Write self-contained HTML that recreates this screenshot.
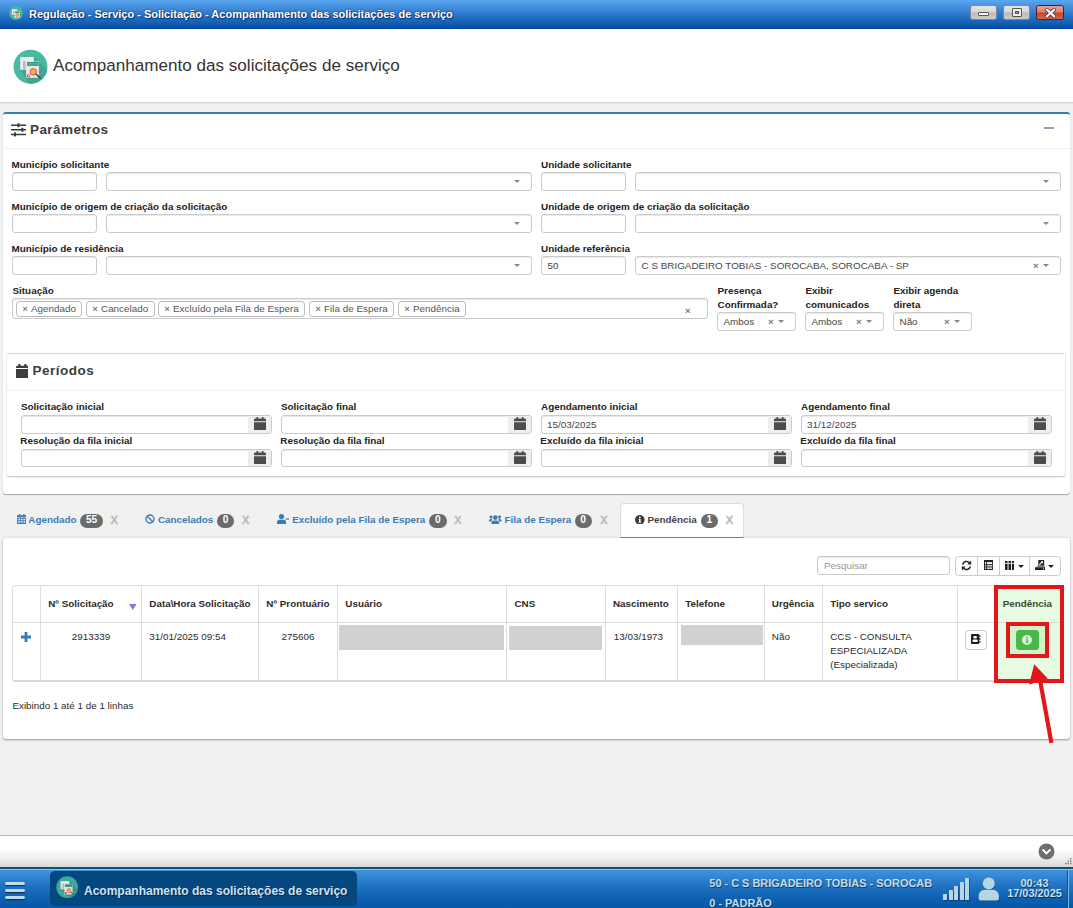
<!DOCTYPE html>
<html><head><meta charset="utf-8"><title>Acompanhamento</title>
<style>
*{box-sizing:border-box;margin:0;padding:0}
html,body{width:1073px;height:908px;overflow:hidden}
body{position:relative;background:#f1f1f1;font-family:"Liberation Sans",sans-serif;font-size:10px;color:#333}
.a{position:absolute}
.t{position:absolute;white-space:nowrap;line-height:1}
.b{font-weight:bold}
#titlebar{left:0;top:0;width:1073px;height:29px;background:linear-gradient(#5aa7f0 0%,#3a84d5 36%,#1c69bb 68%,#0a54aa 92%,#00429c 100%)}
#hdr{left:0;top:29px;width:1073px;height:74px;background:#fff;border-bottom:1px solid #d6d6d6;box-shadow:0 1px 0 #e6e6e6}
.wb{position:absolute;top:5px;height:15px;width:27px;border:1px solid #7d8894;border-radius:2.5px;background:linear-gradient(#e4e4e4 0%,#d6d6d6 46%,#bcbcbc 52%,#cbcbcb 100%)}
.panel{position:absolute;background:#fff;border-radius:3px;box-shadow:0 1px 1px rgba(0,0,0,.18)}
.inp{position:absolute;height:18px;background:#fff;border:1px solid #cbcbcb;border-radius:3px;box-shadow:inset 0 1px 1px rgba(0,0,0,.09)}
.lbl{position:absolute;white-space:nowrap;font-weight:bold;font-size:9.9px;line-height:1;color:#222}
.arr{position:absolute;width:0;height:0;border-left:3px solid transparent;border-right:3px solid transparent;border-top:3px solid #888}
</style></head><body>
<div id="titlebar" class="a">
<svg class="a" style="left:8.8px;top:6px" width="14.2" height="14.2" viewBox="0 0 34 34"><circle cx="17" cy="17" r="16.5" fill="#4ab8a1"/><path d="M20 8L32 20Q30 29 22 33L7 21Z" fill="#40a892"/><rect x="7" y="8" width="13" height="13" fill="#ececee"/><rect x="10" y="12" width="3" height="9" fill="#b5b5ba"/><rect x="13" y="12" width="13" height="16" fill="#eaeaec"/><rect x="14" y="13" width="11" height="4" fill="#2f8f78"/><circle cx="20" cy="22" r="3.5" fill="#e6b94a" stroke="#e8564a" stroke-width="1.5"/></svg>
<div class="t b" style="left:29px;top:9px;font-size:11px;color:#fff;text-shadow:0 0 2px rgba(0,30,80,.9),1px 1px 1px rgba(0,30,80,.6)">Regulação - Serviço - Solicitação - Acompanhamento das solicitações de serviço</div>
<div class="wb" style="left:970px"><div class="a" style="left:7px;top:6px;width:11px;height:4px;background:#fff;border:1px solid #555;border-radius:1px"></div></div>
<div class="wb" style="left:1003px"><div class="a" style="left:8px;top:2px;width:10px;height:9px;background:#eee;border:1px solid #555;border-radius:1px"><div class="a" style="left:2px;top:2px;width:4px;height:3px;border:1px solid #555;background:#999"></div></div></div>
<div class="wb" style="left:1036px;width:28px;border-color:#5a1a1a;background:linear-gradient(#e8a090 0%,#dc8070 48%,#c4442a 52%,#d2664e 100%)"><svg class="a" style="left:7.5px;top:1.8px" width="11" height="10" viewBox="0 0 11 10"><path d="M2 1.8L9 8.2M9 1.8L2 8.2" stroke="#4a3030" stroke-width="3.8" stroke-linecap="square"/><path d="M2 1.8L9 8.2M9 1.8L2 8.2" stroke="#fff" stroke-width="2.3" stroke-linecap="square"/></svg></div>
</div>
<div id="hdr" class="a">
<svg class="a" style="left:13px;top:20px" width="35" height="35" viewBox="0 0 35 35">
<defs><clipPath id="cc"><circle cx="17.5" cy="17.8" r="17"/></clipPath></defs>
<circle cx="17.5" cy="17.8" r="17" fill="#4bb9a2"/>
<g clip-path="url(#cc)"><path d="M20.9 8 L40 27 L40 45 L23 45 L7.2 20.8 Z" fill="#3fa690"/></g>
<rect x="7.2" y="8" width="13.7" height="12.8" fill="#ececee"/>
<rect x="10.1" y="12" width="2.4" height="8.8" fill="#b6b6bb"/>
<rect x="13.1" y="12.5" width="12.8" height="16.3" fill="#e9e9ec"/>
<rect x="14" y="13" width="11.6" height="3.9" fill="#2f8f78"/>
<rect x="14.6" y="14.4" width="10.4" height="1.1" fill="#7fc0ae"/>
<path d="M23 25 L27.3 29.3" stroke="#34465a" stroke-width="1.6" stroke-linecap="round"/>
<circle cx="20.3" cy="22.8" r="3.1" fill="#e4b94c" stroke="#e8574b" stroke-width="1.1"/>
<circle cx="15.3" cy="26.9" r="1.7" fill="#e8453c"/><rect x="15" y="26" width=".7" height="1.8" fill="#fff"/>
</svg>
<div class="t" style="left:53px;top:28px;font-size:17.1px;color:#333">Acompanhamento das solicitações de serviço</div>
</div>

<div class="panel" style="left:3px;top:112px;width:1067px;height:382px;border-top:2px solid #3580b5;box-shadow:0 1px 1px rgba(0,0,0,.32)"></div>
<svg class="a" style="left:11px;top:123px" width="15" height="14" viewBox="0 0 15 14"><g stroke="#3a3a3a" stroke-width="1.5" fill="none"><path d="M0 2.2H15M0 6.8H15M0 11.4H15"/></g><g fill="#3a3a3a"><rect x="6.5" y="0.2" width="2" height="4"/><rect x="10.4" y="4.8" width="2" height="4"/><rect x="3" y="9.4" width="2" height="4"/></g></svg>
<div class="t b" style="left:30px;top:122.5px;font-size:13.5px;letter-spacing:.42px;color:#3c3c3c">Parâmetros</div>
<div class="a" style="left:1044px;top:127px;width:10px;height:2px;background:#97a0b3"></div>
<div class="a" style="left:3px;top:148px;width:1067px;height:1px;background:#f0f0f0"></div>
<div class="lbl" style="left:11.5px;top:159.5px">Município solicitante</div>
<div class="lbl" style="left:541px;top:159.5px">Unidade solicitante</div>
<div class="inp" style="left:12px;top:172px;width:85px;height:19px;"></div>
<div class="inp" style="left:106px;top:172px;width:425.5px;height:19px;"><div class="arr" style="right:11px;top:7px"></div></div>
<div class="inp" style="left:541px;top:172px;width:85px;height:19px;"></div>
<div class="inp" style="left:635px;top:172px;width:425.5px;height:19px;"><div class="arr" style="right:11px;top:7px"></div></div>
<div class="lbl" style="left:11.5px;top:201.5px">Município de origem de criação da solicitação</div>
<div class="lbl" style="left:541px;top:201.5px">Unidade de origem de criação da solicitação</div>
<div class="inp" style="left:12px;top:214px;width:85px;height:19px;"></div>
<div class="inp" style="left:106px;top:214px;width:425.5px;height:19px;"><div class="arr" style="right:11px;top:7px"></div></div>
<div class="inp" style="left:541px;top:214px;width:85px;height:19px;"></div>
<div class="inp" style="left:635px;top:214px;width:425.5px;height:19px;"><div class="arr" style="right:11px;top:7px"></div></div>
<div class="lbl" style="left:11.5px;top:243.5px">Município de residência</div>
<div class="lbl" style="left:541px;top:243.5px">Unidade referência</div>
<div class="inp" style="left:12px;top:256px;width:85px;height:19px;"></div>
<div class="inp" style="left:106px;top:256px;width:425.5px;height:19px;"><div class="arr" style="right:11px;top:7px"></div></div>
<div class="inp" style="left:541px;top:256px;width:85px;height:19px;"><div class="t" style="left:5.5px;top:4px;font-size:9.9px;color:#464646">50</div></div>
<div class="inp" style="left:635px;top:256px;width:425.5px;height:19px;"><div class="t" style="left:5.5px;top:4px;font-size:9.9px;color:#464646">C S BRIGADEIRO TOBIAS - SOROCABA, SOROCABA - SP</div><div class="t b" style="right:21px;top:3.5px;font-size:9.5px;color:#7a7a7a">×</div><div class="arr" style="right:11px;top:7px"></div></div>
<div class="lbl" style="left:12.5px;top:285.5px">Situação</div>
<div class="inp" style="left:12px;top:298px;width:695.5px;height:21px;"><div class="a" style="left:3px;top:2px;width:66px;height:16px;border:1px solid #b9b9b9;border-radius:3.5px;background:#fff"><span class="t b" style="left:5.5px;top:3px;font-size:9px;color:#808080">×</span><span class="t" style="left:14px;top:2px;font-size:9.9px;color:#555">Agendado</span></div><div class="a" style="left:73px;top:2px;width:69px;height:16px;border:1px solid #b9b9b9;border-radius:3.5px;background:#fff"><span class="t b" style="left:5.5px;top:3px;font-size:9px;color:#808080">×</span><span class="t" style="left:14px;top:2px;font-size:9.9px;color:#555">Cancelado</span></div><div class="a" style="left:145px;top:2px;width:147px;height:16px;border:1px solid #b9b9b9;border-radius:3.5px;background:#fff"><span class="t b" style="left:5.5px;top:3px;font-size:9px;color:#808080">×</span><span class="t" style="left:14px;top:2px;font-size:9.9px;color:#555">Excluído pela Fila de Espera</span></div><div class="a" style="left:296px;top:2px;width:85px;height:16px;border:1px solid #b9b9b9;border-radius:3.5px;background:#fff"><span class="t b" style="left:5.5px;top:3px;font-size:9px;color:#808080">×</span><span class="t" style="left:14px;top:2px;font-size:9.9px;color:#555">Fila de Espera</span></div><div class="a" style="left:385px;top:2px;width:68px;height:16px;border:1px solid #b9b9b9;border-radius:3.5px;background:#fff"><span class="t b" style="left:5.5px;top:3px;font-size:9px;color:#808080">×</span><span class="t" style="left:14px;top:2px;font-size:9.9px;color:#555">Pendência</span></div><div class="t b" style="right:16px;top:6.5px;font-size:9.5px;color:#7a7a7a">×</div></div>
<div class="lbl" style="left:717.5px;top:285.5px">Presença</div>
<div class="lbl" style="left:717.5px;top:299.5px">Confirmada?</div>
<div class="inp" style="left:717px;top:312px;width:78.5px;height:19px;"><div class="t" style="left:5.5px;top:4px;font-size:9.9px;color:#464646">Ambos</div><div class="t b" style="right:21px;top:3.5px;font-size:9.5px;color:#7a7a7a">×</div><div class="arr" style="right:11px;top:7px"></div></div>
<div class="lbl" style="left:805.5px;top:285.5px">Exibir</div>
<div class="lbl" style="left:805.5px;top:299.5px">comunicados</div>
<div class="inp" style="left:805px;top:312px;width:78.5px;height:19px;"><div class="t" style="left:5.5px;top:4px;font-size:9.9px;color:#464646">Ambos</div><div class="t b" style="right:21px;top:3.5px;font-size:9.5px;color:#7a7a7a">×</div><div class="arr" style="right:11px;top:7px"></div></div>
<div class="lbl" style="left:893.5px;top:285.5px">Exibir agenda</div>
<div class="lbl" style="left:893.5px;top:299.5px">direta</div>
<div class="inp" style="left:893px;top:312px;width:78.5px;height:19px;"><div class="t" style="left:5.5px;top:4px;font-size:9.9px;color:#464646">Não</div><div class="t b" style="right:21px;top:3.5px;font-size:9.5px;color:#7a7a7a">×</div><div class="arr" style="right:11px;top:7px"></div></div>
<div class="panel" style="left:7px;top:353px;width:1058px;height:123px;border-top:1px solid #d2d6de;box-shadow:0 1px 2px rgba(0,0,0,.28)"></div>
<svg class="a" style="left:15.7px;top:363.8px" width="12.8" height="14.4" viewBox="0 0 12.8 14.4"><g fill="#3d3d3d"><rect x="2.3" y="0" width="2.3" height="3.2" rx=".7"/><rect x="8.2" y="0" width="2.3" height="3.2" rx=".7"/><path d="M1.4 1.7H11.4A1.4 1.4 0 0 1 12.8 3.1V4.1H0V3.1A1.4 1.4 0 0 1 1.4 1.7Z"/><path d="M0 4.9H12.8V13A1.4 1.4 0 0 1 11.4 14.4H1.4A1.4 1.4 0 0 1 0 13Z"/></g></svg>
<div class="t b" style="left:32.5px;top:363.5px;font-size:13.5px;letter-spacing:.5px;color:#3c3c3c">Períodos</div>
<div class="a" style="left:7px;top:390px;width:1058px;height:1px;background:#f0f0f0"></div>
<div class="lbl" style="left:21px;top:401.5px">Solicitação inicial</div>
<div class="inp" style="left:21px;top:415px;width:251px;height:19px;"><div class="a" style="right:0;top:0;width:23px;height:17px;background:#eee;border-radius:0 2px 2px 0"><svg class="a" style="left:5.5px;top:0.8px" width="12" height="13.4" viewBox="0 0 13 14.5"><g fill="#4c4c4c"><rect x="2.6" y="0" width="1.9" height="3" rx=".5"/><rect x="8.5" y="0" width="1.9" height="3" rx=".5"/><path d="M1.2 1.7H11.8A1.2 1.2 0 0 1 13 2.9V4.6H0V2.9A1.2 1.2 0 0 1 1.2 1.7Z"/><path d="M0 5.6H13V13.2A1.3 1.3 0 0 1 11.7 14.5H1.3A1.3 1.3 0 0 1 0 13.2Z"/></g></svg></div></div>
<div class="lbl" style="left:20.3px;top:435.5px">Resolução da fila inicial</div>
<div class="inp" style="left:21px;top:449px;width:251px;height:18px;"><div class="a" style="right:0;top:0;width:23px;height:16px;background:#eee;border-radius:0 2px 2px 0"><svg class="a" style="left:5.5px;top:0.8px" width="12" height="13.4" viewBox="0 0 13 14.5"><g fill="#4c4c4c"><rect x="2.6" y="0" width="1.9" height="3" rx=".5"/><rect x="8.5" y="0" width="1.9" height="3" rx=".5"/><path d="M1.2 1.7H11.8A1.2 1.2 0 0 1 13 2.9V4.6H0V2.9A1.2 1.2 0 0 1 1.2 1.7Z"/><path d="M0 5.6H13V13.2A1.3 1.3 0 0 1 11.7 14.5H1.3A1.3 1.3 0 0 1 0 13.2Z"/></g></svg></div></div>
<div class="lbl" style="left:281px;top:401.5px">Solicitação final</div>
<div class="inp" style="left:281px;top:415px;width:251px;height:19px;"><div class="a" style="right:0;top:0;width:23px;height:17px;background:#eee;border-radius:0 2px 2px 0"><svg class="a" style="left:5.5px;top:0.8px" width="12" height="13.4" viewBox="0 0 13 14.5"><g fill="#4c4c4c"><rect x="2.6" y="0" width="1.9" height="3" rx=".5"/><rect x="8.5" y="0" width="1.9" height="3" rx=".5"/><path d="M1.2 1.7H11.8A1.2 1.2 0 0 1 13 2.9V4.6H0V2.9A1.2 1.2 0 0 1 1.2 1.7Z"/><path d="M0 5.6H13V13.2A1.3 1.3 0 0 1 11.7 14.5H1.3A1.3 1.3 0 0 1 0 13.2Z"/></g></svg></div></div>
<div class="lbl" style="left:280.3px;top:435.5px">Resolução da fila final</div>
<div class="inp" style="left:281px;top:449px;width:251px;height:18px;"><div class="a" style="right:0;top:0;width:23px;height:16px;background:#eee;border-radius:0 2px 2px 0"><svg class="a" style="left:5.5px;top:0.8px" width="12" height="13.4" viewBox="0 0 13 14.5"><g fill="#4c4c4c"><rect x="2.6" y="0" width="1.9" height="3" rx=".5"/><rect x="8.5" y="0" width="1.9" height="3" rx=".5"/><path d="M1.2 1.7H11.8A1.2 1.2 0 0 1 13 2.9V4.6H0V2.9A1.2 1.2 0 0 1 1.2 1.7Z"/><path d="M0 5.6H13V13.2A1.3 1.3 0 0 1 11.7 14.5H1.3A1.3 1.3 0 0 1 0 13.2Z"/></g></svg></div></div>
<div class="lbl" style="left:541px;top:401.5px">Agendamento inicial</div>
<div class="inp" style="left:541px;top:415px;width:251px;height:19px;"><div class="t" style="left:5px;top:4px;font-size:9.9px;color:#444">15/03/2025</div><div class="a" style="right:0;top:0;width:23px;height:17px;background:#eee;border-radius:0 2px 2px 0"><svg class="a" style="left:5.5px;top:0.8px" width="12" height="13.4" viewBox="0 0 13 14.5"><g fill="#4c4c4c"><rect x="2.6" y="0" width="1.9" height="3" rx=".5"/><rect x="8.5" y="0" width="1.9" height="3" rx=".5"/><path d="M1.2 1.7H11.8A1.2 1.2 0 0 1 13 2.9V4.6H0V2.9A1.2 1.2 0 0 1 1.2 1.7Z"/><path d="M0 5.6H13V13.2A1.3 1.3 0 0 1 11.7 14.5H1.3A1.3 1.3 0 0 1 0 13.2Z"/></g></svg></div></div>
<div class="lbl" style="left:540.3px;top:435.5px">Excluído da fila inicial</div>
<div class="inp" style="left:541px;top:449px;width:251px;height:18px;"><div class="a" style="right:0;top:0;width:23px;height:16px;background:#eee;border-radius:0 2px 2px 0"><svg class="a" style="left:5.5px;top:0.8px" width="12" height="13.4" viewBox="0 0 13 14.5"><g fill="#4c4c4c"><rect x="2.6" y="0" width="1.9" height="3" rx=".5"/><rect x="8.5" y="0" width="1.9" height="3" rx=".5"/><path d="M1.2 1.7H11.8A1.2 1.2 0 0 1 13 2.9V4.6H0V2.9A1.2 1.2 0 0 1 1.2 1.7Z"/><path d="M0 5.6H13V13.2A1.3 1.3 0 0 1 11.7 14.5H1.3A1.3 1.3 0 0 1 0 13.2Z"/></g></svg></div></div>
<div class="lbl" style="left:801px;top:401.5px">Agendamento final</div>
<div class="inp" style="left:801px;top:415px;width:251px;height:19px;"><div class="t" style="left:5px;top:4px;font-size:9.9px;color:#444">31/12/2025</div><div class="a" style="right:0;top:0;width:23px;height:17px;background:#eee;border-radius:0 2px 2px 0"><svg class="a" style="left:5.5px;top:0.8px" width="12" height="13.4" viewBox="0 0 13 14.5"><g fill="#4c4c4c"><rect x="2.6" y="0" width="1.9" height="3" rx=".5"/><rect x="8.5" y="0" width="1.9" height="3" rx=".5"/><path d="M1.2 1.7H11.8A1.2 1.2 0 0 1 13 2.9V4.6H0V2.9A1.2 1.2 0 0 1 1.2 1.7Z"/><path d="M0 5.6H13V13.2A1.3 1.3 0 0 1 11.7 14.5H1.3A1.3 1.3 0 0 1 0 13.2Z"/></g></svg></div></div>
<div class="lbl" style="left:800.3px;top:435.5px">Excluído da fila final</div>
<div class="inp" style="left:801px;top:449px;width:251px;height:18px;"><div class="a" style="right:0;top:0;width:23px;height:16px;background:#eee;border-radius:0 2px 2px 0"><svg class="a" style="left:5.5px;top:0.8px" width="12" height="13.4" viewBox="0 0 13 14.5"><g fill="#4c4c4c"><rect x="2.6" y="0" width="1.9" height="3" rx=".5"/><rect x="8.5" y="0" width="1.9" height="3" rx=".5"/><path d="M1.2 1.7H11.8A1.2 1.2 0 0 1 13 2.9V4.6H0V2.9A1.2 1.2 0 0 1 1.2 1.7Z"/><path d="M0 5.6H13V13.2A1.3 1.3 0 0 1 11.7 14.5H1.3A1.3 1.3 0 0 1 0 13.2Z"/></g></svg></div></div>
<svg class="a" style="left:16.8px;top:514.2px" width="9.4" height="10" viewBox="0 0 14 15"><g fill="#3a7ab5"><rect x="2.8" y="0" width="2" height="3"/><rect x="9.2" y="0" width="2" height="3"/><path d="M0 1.8H14V5H0Z"/><path d="M0 5.8H14V15H0Z"/></g><g fill="#f1f1f1"><rect x="1.8" y="7.2" width="2.6" height="2.2"/><rect x="5.7" y="7.2" width="2.6" height="2.2"/><rect x="9.6" y="7.2" width="2.6" height="2.2"/><rect x="1.8" y="10.8" width="2.6" height="2.2"/><rect x="5.7" y="10.8" width="2.6" height="2.2"/><rect x="9.6" y="10.8" width="2.6" height="2.2"/></g></svg>
<div class="t b" style="left:28.3px;top:513.7px;font-size:9.85px;color:#3a7ab5;transform:translateY(.7px)">Agendado</div>
<div class="a" style="left:80px;top:513.5px;width:23px;height:14px;border-radius:7px;background:#6b6b6b"><div class="t b" style="left:0;width:100%;text-align:center;top:1.6px;font-size:10.2px;letter-spacing:-.2px;color:#fff">55</div></div>
<div class="t b" style="left:110.5px;top:514.5px;font-size:11px;color:#bdbdbd;-webkit-text-stroke:.35px #bdbdbd">X</div>
<svg class="a" style="left:145px;top:514px" width="10" height="10" viewBox="0 0 10 10"><circle cx="5" cy="5" r="4" fill="none" stroke="#3a7ab5" stroke-width="1.4"/><path d="M2.2 2.2L7.8 7.8" stroke="#3a7ab5" stroke-width="1.4"/></svg>
<div class="t b" style="left:158px;top:513.7px;font-size:9.85px;color:#3a7ab5;transform:translateY(.7px)">Cancelados</div>
<div class="a" style="left:217px;top:513.5px;width:17px;height:14px;border-radius:7px;background:#6b6b6b"><div class="t b" style="left:0;width:100%;text-align:center;top:1.6px;font-size:10.2px;letter-spacing:-.2px;color:#fff">0</div></div>
<div class="t b" style="left:242px;top:514.5px;font-size:11px;color:#bdbdbd;-webkit-text-stroke:.35px #bdbdbd">X</div>
<svg class="a" style="left:276.8px;top:514px" width="12.6" height="10" viewBox="0 0 12.6 10"><g fill="#3a7ab5"><circle cx="4.5" cy="2.6" r="2.6"/><path d="M0 10V8.3A2.6 2.6 0 0 1 2.6 5.7H6.5A2.6 2.6 0 0 1 9.1 8.3V10Z"/><rect x="8.6" y="4.4" width="4" height="1.4" opacity=".85"/></g></svg>
<div class="t b" style="left:292.3px;top:513.7px;font-size:9.85px;color:#3a7ab5;transform:translateY(.7px)">Excluído pela Fila de Espera</div>
<div class="a" style="left:429px;top:513.5px;width:17.5px;height:14px;border-radius:7px;background:#6b6b6b"><div class="t b" style="left:0;width:100%;text-align:center;top:1.6px;font-size:10.2px;letter-spacing:-.2px;color:#fff">0</div></div>
<div class="t b" style="left:454.2px;top:514.5px;font-size:11px;color:#bdbdbd;-webkit-text-stroke:.35px #bdbdbd">X</div>
<svg class="a" style="left:489px;top:514.5px" width="12.6" height="9.4" viewBox="0 0 12.6 9.4"><g fill="#3a7ab5"><circle cx="6.3" cy="2.6" r="2.3"/><path d="M2.4 9.4V8A2.5 2.5 0 0 1 4.9 5.5H7.7A2.5 2.5 0 0 1 10.2 8V9.4Z"/><circle cx="2" cy="1.9" r="1.5"/><circle cx="10.6" cy="1.9" r="1.5"/><path d="M0 6.6V5.6A1.6 1.6 0 0 1 1.6 4H3.4A3.4 3.4 0 0 0 2.6 6.6Z"/><path d="M12.6 6.6V5.6A1.6 1.6 0 0 0 11 4H9.2A3.4 3.4 0 0 1 10 6.6Z"/></g></svg>
<div class="t b" style="left:504.5px;top:513.7px;font-size:9.85px;color:#3a7ab5;transform:translateY(.7px)">Fila de Espera</div>
<div class="a" style="left:574.5px;top:513.5px;width:17px;height:14px;border-radius:7px;background:#6b6b6b"><div class="t b" style="left:0;width:100%;text-align:center;top:1.6px;font-size:10.2px;letter-spacing:-.2px;color:#fff">0</div></div>
<div class="t b" style="left:600.2px;top:514.5px;font-size:11px;color:#bdbdbd;-webkit-text-stroke:.35px #bdbdbd">X</div>
<div class="panel" style="left:3px;top:537px;width:1067px;height:202px;border-top:1px solid #e4e4e4;box-shadow:0 1px 2px rgba(0,0,0,.38)"></div>
<div class="a" style="left:620px;top:503px;width:124px;height:35px;background:#fff;border:1px solid #dcdcdc;border-bottom:1px solid #3c8dbc;border-radius:4px 4px 0 0"></div>
<svg class="a" style="left:635px;top:514.7px" width="9.6" height="9.6" viewBox="0 0 10 10"><circle cx="5" cy="5" r="5" fill="#3a3a3a"/><circle cx="5" cy="2.5" r="1" fill="#fff"/><path d="M3.8 4.1H5.9V7.3H6.5V8.2H3.6V7.3H4.2V5H3.8Z" fill="#fff"/></svg>
<div class="t b" style="left:647.5px;top:513.7px;font-size:9.85px;color:#444;transform:translateY(.7px)">Pendência</div>
<div class="a" style="left:700.5px;top:513.5px;width:17.5px;height:14px;border-radius:7px;background:#6b6b6b"><div class="t b" style="left:0;width:100%;text-align:center;top:1.6px;font-size:10.2px;letter-spacing:-.2px;color:#fff">1</div></div>
<div class="t b" style="left:725.8px;top:514.5px;font-size:11px;color:#bdbdbd;-webkit-text-stroke:.35px #bdbdbd">X</div>
<div class="inp" style="left:817px;top:556px;width:133px;height:19px;"><div class="t" style="left:6px;top:4px;font-size:9.9px;color:#999">Pesquisar</div></div>
<div class="a" style="left:955px;top:556px;width:106px;height:20px;background:#fff;border:1px solid #ccc;border-radius:3.5px"></div>
<div class="a" style="left:977px;top:557px;width:1px;height:18px;background:#ccc"></div>
<div class="a" style="left:999px;top:557px;width:1px;height:18px;background:#ccc"></div>
<div class="a" style="left:1029px;top:557px;width:1px;height:18px;background:#ccc"></div>
<svg class="a" style="left:960.5px;top:560px" width="11" height="11" viewBox="0 0 11 11"><g fill="none" stroke="#222" stroke-width="1.5"><path d="M1.6 4.6A4 4 0 0 1 8.6 2.9"/><path d="M9.4 6.4A4 4 0 0 1 2.4 8.1"/></g><path d="M10.2 0.6V4.4H6.4Z" fill="#222"/><path d="M0.8 10.4V6.6H4.6Z" fill="#222"/></svg>
<svg class="a" style="left:984px;top:560px" width="9.2" height="10" viewBox="0 0 9.2 10"><rect x=".5" y=".5" width="8.2" height="9" fill="#fff" stroke="#222" stroke-width="1"/><rect x="0" y="0" width="9.2" height="2.2" fill="#222"/><rect x="0" y="8.8" width="9.2" height="1.2" fill="#222"/><rect x="2.2" y="2" width=".9" height="7" fill="#333"/><rect x="1" y="4.1" width="7.4" height="1.1" fill="#222"/><rect x="1" y="6.4" width="7.4" height="1.1" fill="#222"/></svg>
<svg class="a" style="left:1004.8px;top:561px" width="9.6" height="9" viewBox="0 0 9.6 9"><g fill="#222"><rect x="0" y="0" width="2.6" height="1.9"/><rect x="3.5" y="0" width="2.6" height="1.9"/><rect x="7" y="0" width="2.6" height="1.9"/><rect x="0" y="2.7" width="2.6" height="6.3"/><rect x="3.5" y="2.7" width="2.6" height="6.3"/><rect x="7" y="2.7" width="2.6" height="6.3"/></g></svg>
<svg class="a" style="left:1018px;top:565.2px" width="6" height="3" viewBox="0 0 6 3"><path d="M0 0H6L3 3Z" fill="#222"/></svg>
<svg class="a" style="left:1035px;top:560px" width="10.2" height="10" viewBox="0 0 10.2 10"><g fill="#222"><path d="M3.3 0H9.2V5.6H3.3Z"/><path d="M3 5.6H9.4L10.2 7.2H0.6Z" opacity=".55"/><rect x="0" y="7.2" width="10.2" height="2.8" rx=".6"/></g><path d="M4.2 4.9L7.3 1.8" stroke="#fff" stroke-width="1.1"/><path d="M5.6 1.2H8V3.6Z" fill="#fff"/><circle cx="8.5" cy="8.6" r=".6" fill="#cfe3ff"/></svg>
<svg class="a" style="left:1048px;top:565.2px" width="6" height="3" viewBox="0 0 6 3"><path d="M0 0H6L3 3Z" fill="#222"/></svg>
<div class="a" style="left:12px;top:585px;width:1051px;height:97px;border:1px solid #dcdcdc;border-bottom:2px solid #d8d8d8;border-radius:4px;background:#fff"></div>
<div class="a" style="left:13px;top:622px;width:1049px;height:1px;background:#dcdcdc"></div>
<div class="a" style="left:40px;top:586px;width:1px;height:95px;background:#dcdcdc"></div>
<div class="a" style="left:141px;top:586px;width:1px;height:95px;background:#dcdcdc"></div>
<div class="a" style="left:258px;top:586px;width:1px;height:95px;background:#dcdcdc"></div>
<div class="a" style="left:337px;top:586px;width:1px;height:95px;background:#dcdcdc"></div>
<div class="a" style="left:506px;top:586px;width:1px;height:95px;background:#dcdcdc"></div>
<div class="a" style="left:605px;top:586px;width:1px;height:95px;background:#dcdcdc"></div>
<div class="a" style="left:677px;top:586px;width:1px;height:95px;background:#dcdcdc"></div>
<div class="a" style="left:764px;top:586px;width:1px;height:95px;background:#dcdcdc"></div>
<div class="a" style="left:822px;top:586px;width:1px;height:95px;background:#dcdcdc"></div>
<div class="a" style="left:957px;top:586px;width:1px;height:95px;background:#dcdcdc"></div>
<div class="t b" style="left:48.2px;top:599px;font-size:9.85px;color:#2b2b2b">Nº Solicitação</div>
<div class="t b" style="left:149.3px;top:599px;font-size:9.85px;color:#2b2b2b">Data\Hora Solicitação</div>
<div class="t b" style="left:266.3px;top:599px;font-size:9.85px;color:#2b2b2b">Nº Prontuário</div>
<div class="t b" style="left:345.3px;top:599px;font-size:9.85px;color:#2b2b2b">Usuário</div>
<div class="t b" style="left:514.5px;top:599px;font-size:9.85px;color:#2b2b2b">CNS</div>
<div class="t b" style="left:613px;top:599px;font-size:9.85px;color:#2b2b2b">Nascimento</div>
<div class="t b" style="left:685.3px;top:599px;font-size:9.85px;color:#2b2b2b">Telefone</div>
<div class="t b" style="left:771.8px;top:599px;font-size:9.85px;color:#2b2b2b">Urgência</div>
<div class="t b" style="left:830.2px;top:599px;font-size:9.85px;color:#2b2b2b">Tipo servico</div>
<svg class="a" style="left:128.8px;top:604.2px" width="7.6" height="6" viewBox="0 0 7.6 6"><path d="M0 0H7.6L3.8 6Z" fill="#7d7dd6"/></svg>
<svg class="a" style="left:20.5px;top:632px" width="10" height="10" viewBox="0 0 10 10"><path d="M3.6 0H6.4V3.6H10V6.4H6.4V10H3.6V6.4H0V3.6H3.6Z" fill="#337ab7"/></svg>
<div class="t" style="left:41px;top:631.5px;font-size:9.85px;color:#2b2b2b;width:100px;text-align:center">2913339</div>
<div class="t" style="left:149.3px;top:631.5px;font-size:9.85px;color:#2b2b2b;">31/01/2025 09:54</div>
<div class="t" style="left:259px;top:631.5px;font-size:9.85px;color:#2b2b2b;width:78px;text-align:center">275606</div>
<div class="a" style="left:339px;top:624.5px;width:165px;height:25px;background:#d0d1d3"></div>
<div class="a" style="left:509px;top:625.5px;width:93px;height:24px;background:#d0d1d3"></div>
<div class="t" style="left:613.8px;top:631.5px;font-size:9.85px;color:#2b2b2b;">13/03/1973</div>
<div class="a" style="left:681px;top:624.5px;width:82px;height:20.5px;background:#d0d1d3"></div>
<div class="t" style="left:771.8px;top:631.5px;font-size:9.85px;color:#2b2b2b;">Não</div>
<div class="t" style="left:830.2px;top:631.5px;font-size:9.85px;color:#2b2b2b;">CCS - CONSULTA</div>
<div class="t" style="left:830.2px;top:645.5px;font-size:9.85px;color:#2b2b2b;">ESPECIALIZADA</div>
<div class="t" style="left:830.2px;top:660px;font-size:9.85px;color:#2b2b2b;">(Especializada)</div>
<div class="a" style="left:965px;top:630px;width:22px;height:20px;background:#fff;border:1px solid #ccc;border-radius:3.5px"></div>
<svg class="a" style="left:971.3px;top:634px" width="9.4" height="10" viewBox="0 0 9.4 10"><rect x="0" y="0" width="8.2" height="10" rx="1.1" fill="#1c1c1c"/><g fill="#1c1c1c"><rect x="8.2" y="1.1" width="1.2" height="1.7"/><rect x="8.2" y="4.1" width="1.2" height="1.7"/><rect x="8.2" y="7.1" width="1.2" height="1.7"/></g><rect x="2.3" y="2" width="3.6" height="2.4" rx=".8" fill="#fff"/><rect x="1.6" y="5.6" width="5" height="2.3" rx=".7" fill="#fff"/></svg>
<div class="a" style="left:994px;top:585px;width:70px;height:97.5px;background:#e6fbe2;border:4px solid #e1171c"></div>
<div class="a" style="left:998px;top:622px;width:62px;height:1px;background:#cfe3cb"></div>
<div class="t b" style="left:1002.8px;top:599px;font-size:9.85px;color:#3d4a36">Pendência</div>
<div class="a" style="left:1006px;top:622px;width:43px;height:35.5px;background:#cdf5c8;border:4px solid #e1171c"></div>
<div class="a" style="left:1016px;top:630px;width:23px;height:20px;background:#4cb748;border-radius:3.5px"></div>
<svg class="a" style="left:1022.2px;top:634.5px" width="10" height="10" viewBox="0 0 10 10"><circle cx="5" cy="5" r="5" fill="#d8f3d2"/><circle cx="5" cy="2.6" r=".95" fill="#4cb748"/><path d="M3.9 4.2H5.8V7.2H6.4V8H3.7V7.2H4.3V5H3.9Z" fill="#4cb748"/></svg>
<svg class="a" style="left:1020px;top:660px" width="45" height="90" viewBox="1020 660 45 90"><path d="M1040.2 681 L1051.4 742.8" stroke="#e1171c" stroke-width="4.2" fill="none"/><path d="M1034.2 664.2 L1029 684.8 L1047.8 678.4 Z" fill="#e1171c"/></svg>
<div class="t" style="left:12.4px;top:700.5px;font-size:9.85px;color:#2b2b2b;">Exibindo 1 até 1 de 1 linhas</div>
<div class="a" style="left:0;top:835px;width:1073px;height:33px;border-top:1px solid #b8b8b8;background:linear-gradient(#fff 0%,#fff 40%,#f3f3f3 62%,#e2e2e2 85%,#d6d6d6 100%)"></div>
<svg class="a" style="left:1037.5px;top:843px" width="17" height="17" viewBox="0 0 17 17"><circle cx="8.5" cy="8.5" r="8" fill="#6e6e6e"/><path d="M4.6 6.6L8.5 10.4L12.4 6.6" fill="none" stroke="#fff" stroke-width="2.1"/></svg>
<svg class="a" style="left:1064px;top:858px" width="8" height="8" viewBox="0 0 8 8"><g fill="#777"><rect x="6" y="0" width="1.4" height="1.4"/><rect x="3.6" y="2.4" width="1.4" height="1.4"/><rect x="6" y="2.4" width="1.4" height="1.4"/><rect x="1.2" y="4.8" width="1.4" height="1.4"/><rect x="3.6" y="4.8" width="1.4" height="1.4"/><rect x="6" y="4.8" width="1.4" height="1.4"/></g></svg>
<div class="a" style="left:0;top:867px;width:1073px;height:2px;background:#0f5377"></div>
<div class="a" style="left:0;top:869px;width:1073px;height:39px;background:linear-gradient(#3f92de 0%,#2f82d0 22%,#1a6cbc 52%,#0b5eae 80%,#0658a8 100%);border-top:1px solid #8cc0ee"></div>
<div class="a" style="left:5px;top:882px;width:20px;height:3.2px;background:#bcdeea;border-radius:1.5px;box-shadow:0 1.2px .6px rgba(5,30,70,.7)"></div>
<div class="a" style="left:5px;top:889px;width:20px;height:3.2px;background:#bcdeea;border-radius:1.5px;box-shadow:0 1.2px .6px rgba(5,30,70,.7)"></div>
<div class="a" style="left:5px;top:896px;width:20px;height:3.2px;background:#bcdeea;border-radius:1.5px;box-shadow:0 1.2px .6px rgba(5,30,70,.7)"></div>
<div class="a" style="left:50px;top:871px;width:307px;height:35px;background:#05477f;border-radius:5px"></div>
<svg class="a" style="left:55.8px;top:875.7px" width="22.4" height="22.4" viewBox="0 0 35 35"><circle cx="17.5" cy="17.5" r="17" fill="#3ca99d"/><path d="M20.9 8L33 20Q31 30 22 34L7.2 20.8Z" fill="#34998c"/><rect x="7.2" y="8" width="13.7" height="12.8" fill="#e4e6e8"/><rect x="10.1" y="12" width="2.4" height="8.8" fill="#b6b6bb"/><rect x="13.1" y="12.5" width="12.8" height="16.3" fill="#dfe2e5"/><rect x="14" y="13" width="11.6" height="3.9" fill="#2f8f78"/><path d="M23 25L27.3 29.3" stroke="#34465a" stroke-width="1.6"/><circle cx="20.3" cy="22.8" r="3.1" fill="#e4b94c" stroke="#e8574b" stroke-width="1.1"/><circle cx="15.3" cy="26.9" r="1.7" fill="#e8453c"/></svg>
<div class="t b" style="left:84px;top:884.5px;font-size:12px;color:#cfe3ee;text-shadow:.6px .9px .8px rgba(0,15,50,.6)">Acompanhamento das solicitações de serviço</div>
<div class="t b" style="left:709.3px;top:878px;font-size:10.95px;color:#c5dcea;text-shadow:.6px .9px .8px rgba(0,20,60,.6)">50 - C S BRIGADEIRO TOBIAS - SOROCAB</div>
<div class="t b" style="left:709.3px;top:898px;font-size:10.95px;color:#c5dcea;text-shadow:.6px .9px .8px rgba(0,20,60,.6)">0 - PADRÃO</div>
<div class="a" style="left:943px;top:893.8px;width:4px;height:6.2px;background:#b5d6e3;border-radius:.5px;box-shadow:.6px .8px .5px rgba(5,30,70,.6)"></div>
<div class="a" style="left:948.7px;top:890px;width:4px;height:10px;background:#b5d6e3;border-radius:.5px;box-shadow:.6px .8px .5px rgba(5,30,70,.6)"></div>
<div class="a" style="left:954.2px;top:885.8px;width:4px;height:14.2px;background:#b5d6e3;border-radius:.5px;box-shadow:.6px .8px .5px rgba(5,30,70,.6)"></div>
<div class="a" style="left:959.8px;top:881.6px;width:4px;height:18.4px;background:#b5d6e3;border-radius:.5px;box-shadow:.6px .8px .5px rgba(5,30,70,.6)"></div>
<div class="a" style="left:965.2px;top:877.7px;width:4px;height:22.3px;background:#b5d6e3;border-radius:.5px;box-shadow:.6px .8px .5px rgba(5,30,70,.6)"></div>
<svg class="a" style="left:977px;top:874.8px" width="24" height="27" viewBox="-1.5 -1.2 24 27"><g fill="#0a3766" opacity=".55" transform="translate(.5,.9)"><circle cx="10.3" cy="7.2" r="6"/><path d="M0.2 24.2V19.6A6 6 0 0 1 6.2 13.6H14.4A6 6 0 0 1 20.4 19.6V24.2Z"/></g><g fill="#b5d6e3"><circle cx="10.3" cy="7.2" r="6"/><path d="M0.2 24.2V19.6A6 6 0 0 1 6.2 13.6H14.4A6 6 0 0 1 20.4 19.6V22.2A2 2 0 0 1 18.4 24.2H2.2A2 2 0 0 1 .2 22.2Z"/></g></svg>
<div class="t b" style="left:1007px;width:55px;text-align:center;top:877.5px;font-size:10.95px;color:#c9e0ea;text-shadow:.6px .9px .8px rgba(0,20,60,.75)">00:43</div>
<div class="t b" style="left:1007px;width:55px;text-align:center;top:887.5px;font-size:10.95px;color:#c9e0ea;text-shadow:.6px .9px .8px rgba(0,20,60,.75)">17/03/2025</div>
<div class="a" style="left:1067px;top:870px;width:1px;height:38px;background:#0c4f93;box-shadow:1px 0 0 #7fb6e6"></div>
</body></html>
